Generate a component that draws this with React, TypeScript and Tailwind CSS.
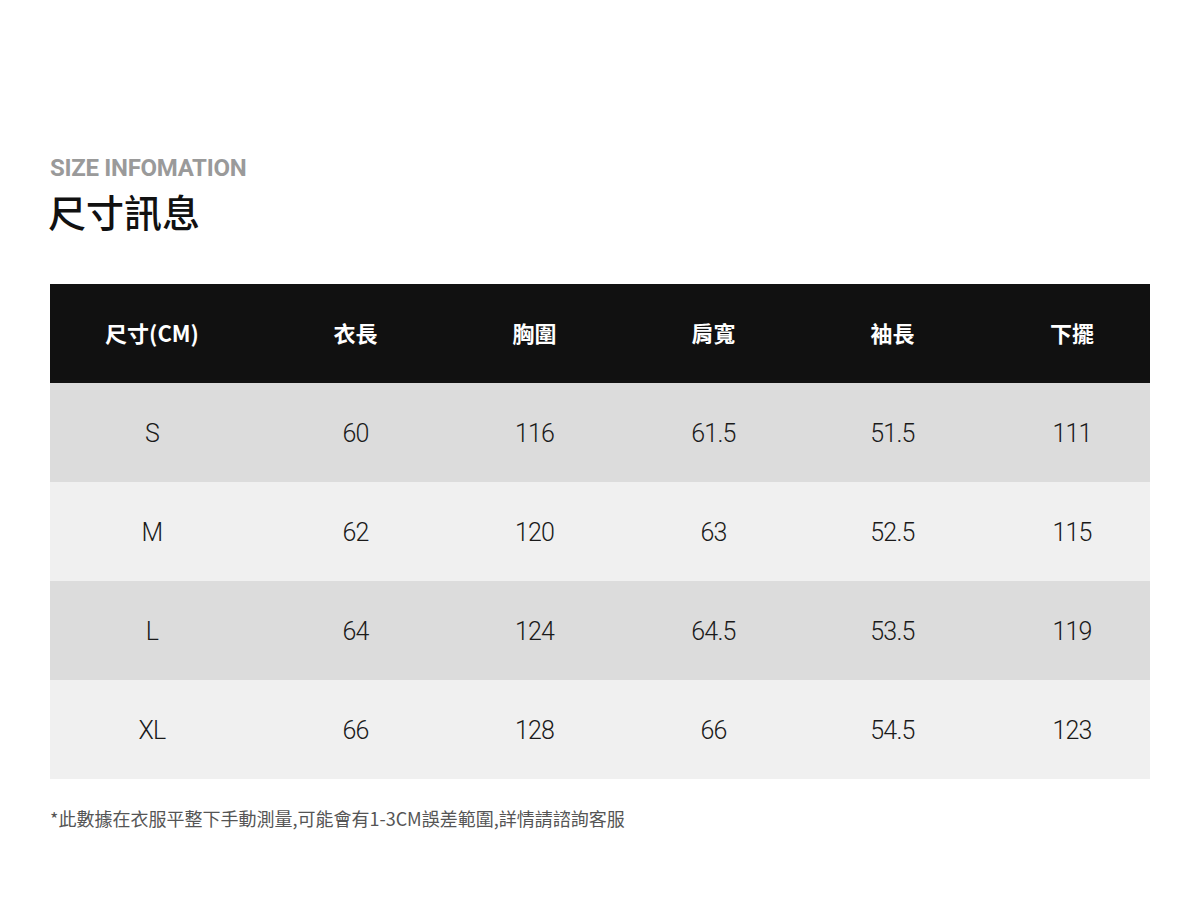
import React from "react";

const headers = ["尺寸(CM)", "衣長", "胸圍", "肩寬", "袖長", "下擺"];
const rows = [
  ["S", "60", "116", "61.5", "51.5", "111"],
  ["M", "62", "120", "63", "52.5", "115"],
  ["L", "64", "124", "64.5", "53.5", "119"],
  ["XL", "66", "128", "66", "54.5", "123"],
];

const cjk = "font-['Noto_Sans_CJK_TC','Noto_Sans_CJK_SC',sans-serif]";

function cellPad(i: number) {
  if (i === 0) return "pr-3";
  if (i === 5) return "pl-3";
  return "";
}

export default function App() {
  return (
    <div className="w-[1200px] h-[913px] bg-white px-[50px] pt-[156px]">
      <div className="font-['Roboto',sans-serif] font-bold text-[24px] leading-[24px] text-[#9a9a9a] tracking-[-0.3px]">
        SIZE INFOMATION
      </div>
      <div className={`${cjk} mt-[12px] -ml-[2px] text-[38px] leading-[38px] font-medium text-[#111]`}>
        尺寸訊息
      </div>
      <div className="mt-[54px] w-[1100px] overflow-hidden">
        <div className="grid grid-cols-[216px_179px_179px_179px_179px_168px] h-[99px] bg-[#111111] items-center">
          {headers.map((h, i) => (
            <div
              key={h}
              className={`${cjk} ${cellPad(i)} text-center text-white font-bold text-[22px] leading-[24px] -mt-[3px]`}
            >
              {h}
            </div>
          ))}
        </div>
        {rows.map((r, ri) => (
          <div
            key={r[0]}
            className={`grid grid-cols-[216px_179px_179px_179px_179px_168px] h-[99px] items-center ${
              ri % 2 === 0 ? "bg-[#dcdcdc]" : "bg-[#f0f0f0]"
            }`}
          >
            {r.map((c, i) => (
              <div
                key={i}
                className={`${cellPad(i)} text-center font-['Roboto',sans-serif] font-light text-[25px] leading-[26px] tracking-[-0.8px] text-[#1a1a1a] mt-[2px]`}
              >
                {c}
              </div>
            ))}
          </div>
        ))}
      </div>
      <div className={`${cjk} mt-[30px] text-[18px] leading-[18px] text-[#555]`}>
        *此數據在衣服平整下手動測量,可能會有1-3CM誤差範圍,詳情請諮詢客服
      </div>
    </div>
  );
}
